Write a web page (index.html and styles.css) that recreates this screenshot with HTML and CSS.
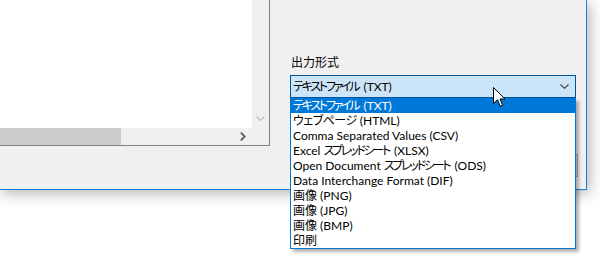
FILE: index.html
```html
<!DOCTYPE html>
<html lang="ja">
<head>
<meta charset="utf-8">
<link rel="stylesheet" href="styles.css">
</head>
<body>
<div class="window">
  <div class="listbox">
    <div class="lb-content"></div>
    <div class="vscroll">
      <svg class="v-arrow" width="9" height="6" viewBox="0 0 9 6"><path d="M0.5 0.5 L4.5 4.5 L8.5 0.5" fill="none" stroke="#c2c2c2" stroke-width="1.4"/></svg>
    </div>
    <div class="hscroll">
      <div class="hthumb"></div>
      <svg class="h-arrow" width="6" height="9" viewBox="0 0 6 9"><path d="M0.8 0.5 L4.8 4.5 L0.8 8.5" fill="none" stroke="#606060" stroke-width="1.8"/></svg>
    </div>
    <div class="corner"></div>
  </div>
  <div class="panel">
    <div class="label">出力形式</div>
    <div class="combo">
      <span class="combo-text"><span class="kana">テキストファイル</span> (TXT)</span>
      <svg class="chev" width="9" height="5" viewBox="0 0 9 5"><path d="M0.5 0.5 L4.5 4.3 L8.5 0.5" fill="none" stroke="#3c3c3c" stroke-width="1.1"/></svg>
    </div>
    <div class="btn-row"><div class="btn"></div></div>
  </div>
</div>
<ul class="popup">
  <li class="item selected"><span class="kana">テキストファイル</span> (TXT)</li>
  <li class="item"><span class="kana-s">ウェブページ</span> (HTML)</li>
  <li class="item">Comma Separated Values (CSV)</li>
  <li class="item">Excel <span class="kana">スプレッドシート</span> (XLSX)</li>
  <li class="item">Open Document <span class="kana">スプレッドシート</span> (ODS)</li>
  <li class="item">Data Interchange Format (DIF)</li>
  <li class="item">画像 (PNG)</li>
  <li class="item">画像 (JPG)</li>
  <li class="item">画像 (BMP)</li>
  <li class="item">印刷</li>
</ul>
<svg class="cursor" width="14" height="22" viewBox="0 0 14 22"><path d="M0.5 0.5 L0.5 16.5 L4.5 12.8 L7.2 19.2 L9.6 18.2 L7 12 L12 12 Z" fill="#fff" stroke="#000" stroke-width="1" stroke-linejoin="miter"/></svg>
</body>
</html>
```
FILE: styles.css
```css
html, body {
  margin: 0;
  padding: 0;
}
body {
  width: 600px;
  height: 260px;
  background: #ffffff;
  position: relative;
  overflow: hidden;
  font-family: Lato, "Noto Sans CJK JP", sans-serif;
  font-feature-settings: "palt";
  font-size: 12px;
  color: #000;
}
.kana {
  letter-spacing: -2.25px;
  margin-right: 2px;
}
.kana-s {
  letter-spacing: -0.5px;
}
.window {
  width: 586px;
  height: 189px;
  background: #f0f0f0;
  border-right: 1px solid #1a7fd4;
  border-bottom: 1px solid #1a7fd4;
  box-shadow: 2px 3px 14px rgba(0, 0, 0, 0.32);
  display: flex;
  align-items: flex-start;
}
.listbox {
  width: 269px;
  height: 145px;
  border-right: 1px solid #828282;
  border-bottom: 1px solid #828282;
  display: grid;
  grid-template-columns: 252px 17px;
  grid-template-rows: 128px 17px;
  flex-shrink: 0;
}
.lb-content {
  background: #ffffff;
}
.vscroll {
  background: #f0f0f0;
  display: flex;
  align-items: flex-end;
  justify-content: center;
  padding-bottom: 6px;
}
.hscroll {
  background: #f0f0f0;
  display: flex;
  align-items: center;
  justify-content: space-between;
  padding-right: 6px;
}
.hthumb {
  width: 121px;
  height: 17px;
  background: #cdcdcd;
}
.corner {
  background: #f0f0f0;
}
.panel {
  padding-left: 20px;
  padding-top: 55px;
  width: 286px;
  display: flex;
  flex-direction: column;
}
.label {
  line-height: 16px;
  height: 16px;
  padding-left: 1px;
  margin-bottom: 4px;
}
.combo {
  box-sizing: border-box;
  width: 286px;
  height: 23px;
  background: #cce4f7;
  border: 1px solid #005499;
  display: flex;
  align-items: center;
  justify-content: space-between;
  padding: 0 6px 0 2px;
}
.combo-text {
  line-height: 15px;
}
.chev {
  display: block;
}
.btn-row {
  display: flex;
  justify-content: flex-end;
  margin-top: 56px;
  margin-right: -2px;
}
.btn {
  width: 75px;
  height: 21px;
  background: #e1e1e1;
  border: 1px solid #adadad;
}
.popup {
  position: absolute;
  left: 290px;
  top: 98px;
  width: 284px;
  margin: 0;
  padding: 0;
  list-style: none;
  background: #ffffff;
  border: 1px solid #0078d7;
  border-top: none;
  box-shadow: 3px 3px 3px rgba(0, 0, 0, 0.3);
}
.item {
  height: 15px;
  line-height: 15px;
  padding-left: 2px;
  white-space: nowrap;
}
.item.selected {
  background: #0078d7;
  color: #ffffff;
}
.cursor {
  position: absolute;
  left: 493px;
  top: 87px;
}
```
